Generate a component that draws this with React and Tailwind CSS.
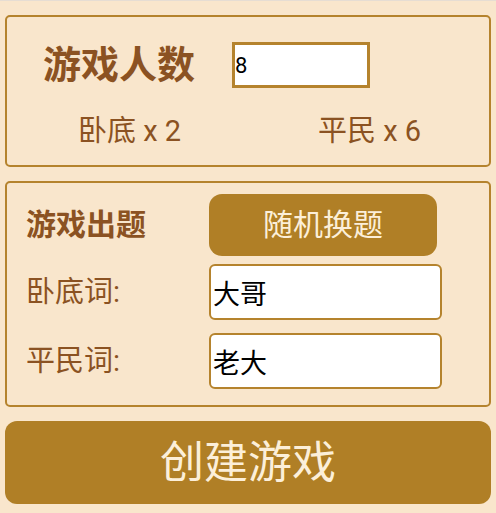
import React, { useState } from 'react';

const font = "font-['Roboto','Noto_Sans_CJK_SC',sans-serif]";

export default function App() {
  const [count, setCount] = useState('8');
  const [spy, setSpy] = useState('大哥');
  const [civ, setCiv] = useState('老大');

  return (
    <div className={`w-[496px] h-[513px] bg-[#f9e6cc] border-t border-[#e6ddd3] ${font} flex flex-col px-[5px] pt-[14px]`}>
      {/* player count */}
      <div className="h-[152px] border-2 border-[#b5832d] rounded-[5px] flex flex-col">
        <div className="flex items-center h-[72px] mt-[12px]">
          <span className="ml-[36px] w-[189px] text-[38px] font-bold text-[#8b5222] leading-none">游戏人数</span>
          <input
            value={count}
            onChange={e => setCount(e.target.value)}
            className="w-[138px] h-[46px] bg-white border-[3px] border-[#b5832d] outline-none px-0 text-[22px] text-black"
          />
        </div>
        <div className="flex text-[29px] text-[#8b5222] leading-none mt-[16px]">
          <span className="ml-[71px] w-[240px]">卧底 x 2</span>
          <span>平民 x 6</span>
        </div>
      </div>

      {/* topic */}
      <div className="mt-[14px] h-[226px] border-2 border-[#b5832d] rounded-[5px] pl-[19px] pt-[11px] flex flex-col gap-[8px]">
        <div className="flex items-center">
          <span className="w-[183px] text-[30px] font-bold text-[#8b5222] leading-none">游戏出题</span>
          <button className="w-[228px] h-[62px] rounded-[13px] bg-[#b07f26] text-[#fcefd9] text-[30px] leading-none">随机换题</button>
        </div>
        <div className="flex items-center">
          <span className="w-[183px] text-[29px] text-[#8b5222] leading-none">卧底词:</span>
          <input
            value={spy}
            onChange={e => setSpy(e.target.value)}
            className="w-[233px] h-[56px] bg-white border-2 border-[#b5832d] rounded-[6px] outline-none px-[2px] text-[27px] text-black"
          />
        </div>
        <div className="flex items-center mt-[5px]">
          <span className="w-[183px] text-[29px] text-[#8b5222] leading-none">平民词:</span>
          <input
            value={civ}
            onChange={e => setCiv(e.target.value)}
            className="w-[233px] h-[56px] bg-white border-2 border-[#b5832d] rounded-[6px] outline-none px-[2px] text-[27px] text-black"
          />
        </div>
      </div>

      <button className="mt-[14px] w-[486px] h-[83px] rounded-[12px] bg-[#b07f26] text-[#fcefd9] text-[44px] leading-none">创建游戏</button>
    </div>
  );
}
